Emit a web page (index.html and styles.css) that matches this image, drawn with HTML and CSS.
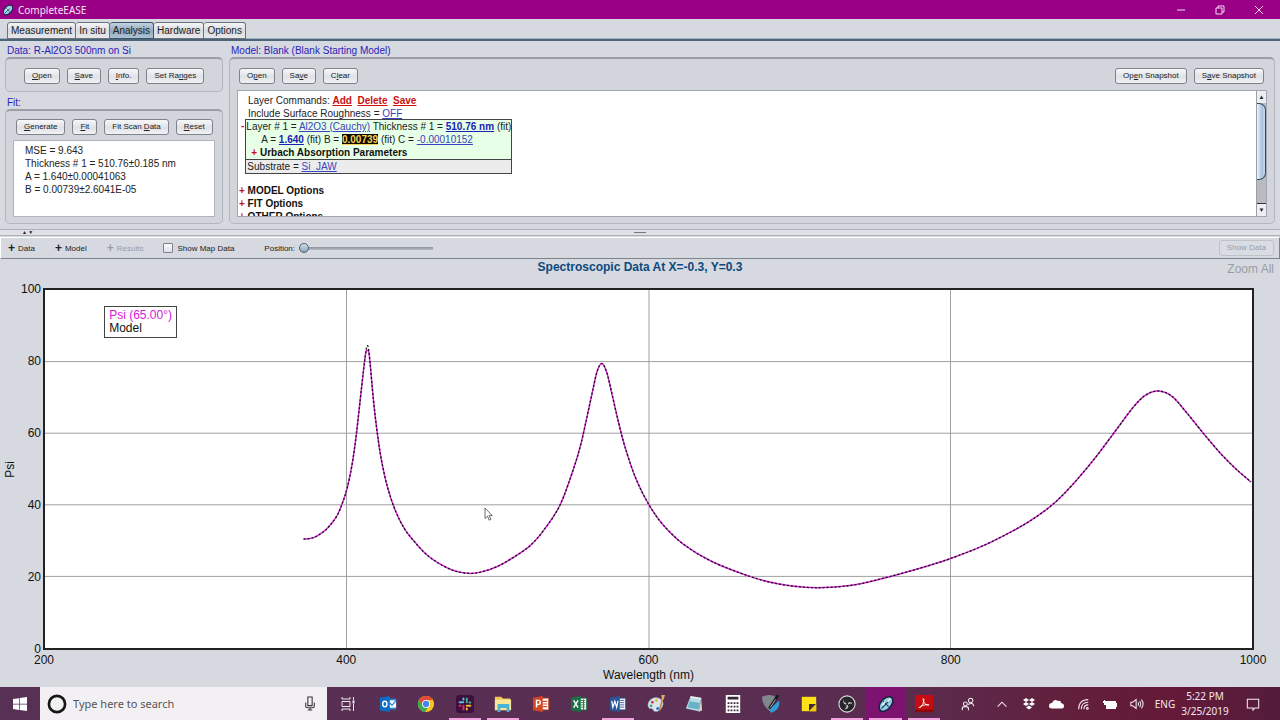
FILE: index.html
```html
<!DOCTYPE html>
<html lang="en">
<head>
<meta charset="utf-8">
<title>CompleteEASE</title>
<link rel="stylesheet" href="styles.css">
</head>
<body>
<svg class="defs" aria-hidden="true">
  <symbol id="logo" viewBox="0 0 16 16">
    <ellipse cx="8" cy="8" rx="4.6" ry="7.6" transform="rotate(42 8 8)" fill="#9bd0e8" stroke="#10283c" stroke-width="1.4"/>
    <path d="M4 12 12 4M5.500 5.500l5 5" stroke="#1b4b66" stroke-width="1" fill="none"/>
    <path d="M5 9l2-3M9.500 6l2.500-2.500" stroke="#fff" stroke-width="1.2"/>
  </symbol>
</svg>

<header class="titlebar">
  <svg class="app-logo"><use href="#logo"/></svg>
  <span class="app-name">CompleteEASE</span>
  <div class="window-buttons">
    <button aria-label="Minimize"><svg viewBox="0 0 10 10"><path d="M1 5h8"/></svg></button>
    <button aria-label="Restore"><svg viewBox="0 0 10 10"><path d="M1 3h6v6H1zM3 3V1h6v6H7"/></svg></button>
    <button aria-label="Close"><svg viewBox="0 0 10 10"><path d="M1 1l8 8M9 1 1 9"/></svg></button>
  </div>
</header>

<nav class="tabs">
  <button class="tab">Measurement</button>
  <button class="tab">In situ</button>
  <button class="tab active">Analysis</button>
  <button class="tab">Hardware</button>
  <button class="tab">Options</button>
</nav>

<main class="analysis">
  <section class="workspace">
    <div class="side">
      <h2 class="caption">Data: R-Al2O3 500nm on Si</h2>
      <div class="panel data-panel">
        <button class="btn"><u>O</u>pen</button>
        <button class="btn"><u>S</u>ave</button>
        <button class="btn"><u>I</u>nfo.</button>
        <button class="btn">Set Ra<u>n</u>ges</button>
      </div>
      <h2 class="caption fit-caption">Fit:</h2>
      <div class="panel fit-panel">
        <div class="fit-buttons">
          <button class="btn"><u>G</u>enerate</button>
          <button class="btn"><u>F</u>it</button>
          <button class="btn">Fit Scan <u>D</u>ata</button>
          <button class="btn"><u>R</u>eset</button>
        </div>
        <div class="fit-results">
          <p>MSE = 9.643</p>
          <p>Thickness # 1 = 510.76±0.185 nm</p>
          <p>A = 1.640±0.00041063</p>
          <p>B = 0.00739±2.6041E-05</p>
        </div>
      </div>
    </div>

    <div class="model">
      <h2 class="caption">Model: Blank (Blank Starting Model)</h2>
      <div class="panel model-panel">
        <div class="model-buttons">
          <button class="btn">O<u>p</u>en</button>
          <button class="btn">Sa<u>v</u>e</button>
          <button class="btn">C<u>l</u>ear</button>
          <span class="spacer"></span>
          <button class="btn">Op<u>e</u>n Snapshot</button>
          <button class="btn">S<u>a</u>ve Snapshot</button>
        </div>
        <div class="editor">
          <div class="editor-text">
            <p class="indent">Layer Commands: <a class="cmd" href="#">Add</a>&nbsp; <a class="cmd" href="#">Delete</a>&nbsp; <a class="cmd" href="#">Save</a></p>
            <p class="indent">Include Surface Roughness = <a href="#">OFF</a></p>
            <div class="layer-row">
              <span class="mark">-</span>
              <div class="layers">
                <div class="layer">
                  <p>Layer # 1 = <a href="#">Al2O3 (Cauchy)</a> Thickness # 1 = <a class="fitted" href="#">510.76 nm</a> (fit)</p>
                  <p class="params">A = <a class="fitted" href="#">1.640</a> (fit) B = <a class="fitted selected" href="#">0.00739</a> (fit) C = <a href="#">-0.00010152</a></p>
                  <p class="heading urbach"><span class="mark">+</span> Urbach Absorption Parameters</p>
                </div>
                <p class="substrate">Substrate = <a href="#">Si_JAW</a></p>
              </div>
            </div>
            <div class="options">
              <p class="heading"><span class="mark">+</span> MODEL Options</p>
              <p class="heading"><span class="mark">+</span> FIT Options</p>
              <p class="heading"><span class="mark">+</span> OTHER Options</p>
            </div>
          </div>
          <div class="scrollbar">
            <button aria-label="Scroll up">▲</button>
            <div class="track"><div class="thumb"></div></div>
            <button aria-label="Scroll down">▼</button>
          </div>
        </div>
      </div>
    </div>
  </section>

  <div class="splitter"><span class="arrows">▲ ▼</span><span class="grip"></span></div>

  <div class="toolbar">
    <button class="tool"><b>+</b>Data</button>
    <button class="tool"><b>+</b>Model</button>
    <button class="tool" disabled><b>+</b>Results</button>
    <label class="check"><input type="checkbox">Show Map Data</label>
    <label class="position">Position:<input type="range" min="0" max="100" value="0"></label>
    <span class="spacer"></span>
    <button class="btn show-data" disabled>Show Data</button>
  </div>

  <section class="chart">
    <div class="chart-head">
      <span></span>
      <h1>Spectroscopic Data At X=-0.3, Y=0.3</h1>
      <button class="zoom-all">Zoom All</button>
    </div>
    <div class="y-title"><span>Psi</span></div>
    <div class="y-ticks"><span>100</span><span>80</span><span>60</span><span>40</span><span>20</span><span>0</span></div>
    <div class="plot">
      <svg class="plot-svg" viewBox="44 289 1209 360" preserveAspectRatio="none">
        <path class="grid-line" d="M44 361H1253M44 433H1253M44 505H1253M44 577H1253M346 289V649M649 289V649M951 289V649"/>
        <path class="curve" id="data-curve"/>
        <path class="curve fit" id="model-curve"/>
      </svg>
      <div class="legend"><span class="psi">Psi (65.00°)</span><span>Model</span></div>
      <svg class="cursor" viewBox="0 0 9 14"><path d="M1 1v10.500l2.500-2.300 1.700 4 1.700-.8-1.700-3.800h3z"/></svg>
    </div>
    <div class="x-ticks"><span>200</span><span>400</span><span>600</span><span>800</span><span>1000</span></div>
    <div class="x-title">Wavelength (nm)</div>
  </section>
</main>

<footer class="taskbar">
  <button class="start" aria-label="Start"><svg viewBox="0 0 14 14"><path fill="#fff" d="M0 2 6 1.200v5.500H0zM6.700 1.100 14 0v6.700H6.700zM0 7.400h6v5.500L0 12zM6.700 7.400H14V14l-7.300-1.100z"/></svg></button>
  <label class="search">
    <svg class="ring" viewBox="0 0 18 18"><circle cx="9" cy="9" r="7.300" fill="none" stroke="#161616" stroke-width="2.400"/></svg>
    <input type="text" placeholder="Type here to search" aria-label="Search">
    <svg class="mic" viewBox="0 0 10 14"><path d="M3 1h4v8H3zM1 6v3.500q0 1.500 1.500 1.500h5Q9 11 9 9.500V6M5 11v2M3 13h4" fill="none" stroke="#333" stroke-width="1"/></svg>
  </label>
  <button class="task-view" aria-label="Task View"><svg viewBox="0 0 16 14"><path d="M2 0v2h8V0M2 4.500h8v5H2zM2 14v-2h8v2M13.500 0v3M13.500 7v7" fill="none" stroke="#eee" stroke-width="1"/><path d="M12.500 3.500h2v3h-2z" fill="#eee"/></svg></button>
  <div class="apps">
    <button aria-label="Outlook"><svg viewBox="0 0 20 20"><path fill="#2a8bd8" d="M10 4h9v12h-9z"/><path fill="#fff" d="M11 6h8v8h-8z"/><path d="M12 9l2.500 2.500L19 6" stroke="#2a8bd8" stroke-width="1.500" fill="none"/><path fill="#0a6cc4" d="M1 3l11-2v18L1 17z"/><ellipse cx="6.500" cy="10" rx="2.400" ry="3" fill="none" stroke="#fff" stroke-width="1.600"/></svg></button>
    <button aria-label="Chrome"><svg viewBox="0 0 20 20"><circle cx="10" cy="10" r="9" fill="#f8c51c"/><path fill="#e0483a" d="M2.200 5.500A9 9 0 0 1 17.800 5.500H10L5.500 11z"/><path fill="#3fa652" d="M2.200 5.500A9 9 0 0 0 9 19l4-6.500-7-1z"/><circle cx="10" cy="10" r="4.400" fill="#fff"/><circle cx="10" cy="10" r="3.500" fill="#4285f4"/></svg></button>
    <button class="running" aria-label="Slack"><svg viewBox="0 0 20 20"><rect width="20" height="20" rx="4" fill="#3d1040"/><g fill="none" stroke-width="2.200" stroke-linecap="round"><path stroke="#4fc3ea" d="M4 8h4M8.300 4v1"/><path stroke="#3bb37f" d="M12 4v4M15 8.300h1"/><path stroke="#e8b43a" d="M12 12h4M12 15v1"/><path stroke="#df2b61" d="M8.300 12v4M4 12h1"/></g></svg></button>
    <button class="running" aria-label="File Explorer"><svg viewBox="0 0 20 20"><path fill="#efc654" d="M1 2h7l2 2h8v12H1z"/><path fill="#fbe596" d="M1 5h18v12H1z"/><path fill="#4ab4d8" d="M4 10h13v9h-3v-4.500H7V19H4z"/></svg></button>
    <button aria-label="PowerPoint"><svg viewBox="0 0 20 20"><path fill="#fff" stroke="#d04a27" d="M10 3.500h8.500v13H10z"/><path d="M12 7h5M12 10h5M12 13h5" stroke="#d04a27" stroke-width="1.300"/><path fill="#d24625" d="M1 3l11-2v18L1 17z"/><path d="M5 14V6h2.200q2 0 2 2.200T7 10.500H5" fill="none" stroke="#fff" stroke-width="1.600"/></svg></button>
    <button aria-label="Excel"><svg viewBox="0 0 20 20"><path fill="#fff" stroke="#1f7244" d="M10 3.500h8.500v13H10z"/><path d="M12 6h5M12 8.500h5M12 11h5M12 13.500h5M15 5v11" stroke="#1f7244"/><path fill="#1d7044" d="M1 3l11-2v18L1 17z"/><path d="M4 6l5 8M9 6l-5 8" stroke="#fff" stroke-width="1.600"/></svg></button>
    <button class="running" aria-label="Word"><svg viewBox="0 0 20 20"><path fill="#fff" stroke="#2a5699" d="M10 3.500h8.500v13H10z"/><path d="M12 6h5M12 8.500h5M12 11h5M12 13.500h5" stroke="#2a5699"/><path fill="#2a5699" d="M1 3l11-2v18L1 17z"/><path d="M3 6.500l1.300 7L6.500 7l2 6.500 1.500-7" fill="none" stroke="#fff" stroke-width="1.400"/></svg></button>
    <button aria-label="Paint"><svg viewBox="0 0 20 20"><path fill="#d8e6ef" stroke="#8ca6b6" stroke-width=".6" d="M3 6q5-5 11-2 4 2 4 6-1 6-6 8-4 1-5-1-.5-2-2-2-3 1-4-3 0-4 2-6z"/><circle cx="6" cy="8" r="1.600" fill="#d34a3c"/><circle cx="10.500" cy="6" r="1.600" fill="#e6b52d"/><circle cx="4.500" cy="12" r="1.500" fill="#47a04d"/><circle cx="12" cy="15" r="1.800" fill="#3a72c4"/><path d="M17.500 3 14 17" stroke="#c98c52" stroke-width="2"/><path d="M16 0h4l-1.500 5h-2z" fill="#e4ad65"/></svg></button>
    <button aria-label="Notepad"><svg viewBox="0 0 20 20"><path fill="#b5dce6" d="M6 2l12 2-3 14L1 15z"/><path fill="#6ab1c6" d="M5 7l12 2-2 7-12-2z"/><path d="M6 2l12 2" stroke="#e8eff1" stroke-width="2"/><path fill="#d9d5c0" d="M18 4l1 13-4 2z"/></svg></button>
    <button aria-label="Calculator"><svg viewBox="0 0 20 20"><path fill="#fff" d="M2 0h16v20H2z"/><path fill="#3c243a" d="M4 2h12v3H4zM4 8h2v2H4zM7.300 8h2v2h-2zM10.700 8h2v2h-2zM14 8h2v2h-2zM4 12h2v2H4zM7.300 12h2v2h-2zM10.700 12h2v2h-2zM14 12h2v2h-2zM4 16h2v2H4zM7.300 16h2v2h-2zM10.700 16h2v2h-2zM14 16h2v2h-2z"/></svg></button>
    <button aria-label="Pen tool"><svg viewBox="0 0 20 20"><path fill="#80878c" d="M0 2q9-4 15 0L9 18Q0 12 0 2z"/><path fill="#2e9ed9" d="M19 6q2 10-9 14l-2-4z"/><path d="M18 0 8 15" stroke="#15191d" stroke-width="3"/><path d="M15 5l-6 9" stroke="#eee" stroke-width=".8"/></svg></button>
    <button aria-label="Sticky Notes"><svg viewBox="0 0 20 20"><path fill="#fde115" d="M2 2h16v16H2z"/><path fill="#3f2d2b" d="M10 10h8l-8 8z"/><path fill="#f2c911" d="M18 10v8h-8z"/></svg></button>
    <button class="running" aria-label="OBS"><svg viewBox="0 0 20 20"><circle cx="10" cy="10" r="9" fill="#272528" stroke="#dedede" stroke-width="1.200"/><path fill="#bdbdbd" d="M7 3q-2 4 2 6l.5 1-1 .8Q4 9 7 3zM11 8.500q4-2.500 5.500 2.500-2-2.500-4-1l-1 .5zM9 11.500l2-.5q2 4-4 5 3-2 2-4.500z"/></svg></button>
    <button class="running current" aria-label="CompleteEASE"><svg viewBox="0 0 16 16"><use href="#logo"/></svg></button>
    <button class="running" aria-label="Acrobat"><svg viewBox="0 0 20 20"><path fill="#c50c12" d="M0 0h20v19H0z"/><path fill="#8e080e" d="M0 16h20v3H0z"/><path d="M5 14.500q5-4 5-9.500-1-2-1 0Q10 11 15 11.500q1-1-1-1-5 0-9.500 3.500z" fill="none" stroke="#fff" stroke-width="1"/></svg></button>
  </div>
  <span class="spacer"></span>
  <div class="tray">
    <button class="people" aria-label="People"><svg viewBox="0 0 16 16"><circle cx="11" cy="4" r="2.500"/><circle cx="5" cy="8" r="2.200"/><path d="M1.500 15v-2q0-2 3.500-2t3.500 2v2M8 8.500q6-3 6.500 2"/></svg></button>
    <button aria-label="Show hidden icons"><svg viewBox="0 0 16 16"><path d="M3 11l5-5 5 5"/></svg></button>
    <button aria-label="Dropbox"><svg class="solid" viewBox="0 0 16 16"><path d="M5 2l3 2-3 2-3-2zM11 2l3 2-3 2-3-2zM5 6l3 2-3 2-3-2zM11 6l3 2-3 2-3-2zM8 9.500l3 2-3 2-3-2z"/></svg></button>
    <button aria-label="OneDrive"><svg class="solid" viewBox="0 0 16 16"><path d="M1 10q0-3 3-3 2-5 6-2 3-1 3 2 3 .5 3 3 0 2.500-2 2.500H4q-3 0-3-2.500z"/></svg></button>
    <button aria-label="Wi-Fi"><svg viewBox="0 0 16 16"><path d="M3 14Q3 3 14 3M6 14q0-8 8-8M9 14q0-5 5-5"/><circle cx="13" cy="13" r="1"/></svg></button>
    <button aria-label="Battery"><svg class="solid" viewBox="0 0 16 16"><path d="M4 5h10v2h1v4h-1v2H4V9H2V7H1V5h1V4h1v1z"/></svg></button>
    <button aria-label="Volume"><svg viewBox="0 0 16 16"><path d="M1 6h2l4-3v10l-4-3H1zM9 6q1.500 2 0 4M11 4.500q2.500 3.500 0 7M13 3q4 5 0 10"/></svg></button>
    <span class="lang">ENG</span>
    <time class="clock" datetime="2019-03-25T17:22">5:22 PM<br>3/25/2019</time>
    <button class="notify" aria-label="Notifications"><svg viewBox="0 0 16 16"><path d="M1.500 2.500h13v10H10l-2 2.500v-2.500H1.500z"/></svg></button>
  </div>
</footer>
<script src="chart.js"></script>
</body>
</html>
```

FILE: styles.css
```css
* { box-sizing: border-box; }
body {
  margin: 0;
  min-height: 100vh;
  display: flex;
  flex-direction: column;
  background: #d6d9e0;
  font-family: "Liberation Sans", Arial, sans-serif;
  font-size: 10px;
  color: #222;
}
h1, h2, p { margin: 0; }
button, input { font: inherit; color: inherit; margin: 0; }
button { padding: 0; border: 0; background: none; white-space: nowrap; }
.defs { display: none; }
.spacer { flex: 1; }

.titlebar {
  display: flex;
  align-items: center;
  height: 19px;
  padding: 0 2px;
  background: #990085;
  color: #f5e6f3;
  font-family: "Noto Sans", sans-serif;
}
.app-logo { width: 12px; height: 12px; margin-right: 4px; }
.window-buttons { display: flex; margin-left: auto; }
.window-buttons button { width: 39px; height: 19px; }
.window-buttons svg { width: 10px; height: 10px; fill: none; stroke: #f3d9ef; display: block; margin: auto; }

.tabs {
  display: flex;
  padding: 3px 7px 0;
  border-bottom: 2px solid #4a6478;
  box-shadow: inset 0 -1px #9fb2c0;
  height: 22px;
}
.tab {
  height: 17px;
  padding: 0 3px;
  border: 1px solid #6c727b;
  border-left-width: 0;
  border-radius: 3px 3px 0 0;
  background: linear-gradient(#f4f5f7, #d9dce1 50%, #e6e8ec);
}
.tab:first-child { border-left-width: 1px; }
.tab.active { background: linear-gradient(#c3d2df, #91abc1 50%, #aec3d4); border-color: #3c5468; }

.analysis { flex: 1; display: flex; flex-direction: column; }
.workspace {
  display: grid;
  grid-template-columns: 218px 1fr;
  grid-template-rows: minmax(0, 1fr);
  gap: 6px;
  padding: 4px 5px 5px;
  height: 188px;
}
.side, .model { display: flex; flex-direction: column; min-width: 0; }
.caption { flex: none; height: 12px; padding-left: 2px; font-size: 10px; line-height: 12px; font-weight: normal; color: #2a22b8; }
.fit-caption { margin: 5px 0 0; }
.panel {
  border: 1px solid #b3b6be;
  border-top: 2px solid #9b9ea6;
  border-radius: 5px;
  background: #d2d5dc;
}
.btn {
  height: 16px;
  padding: 0 7px;
  border: 1px solid #7d828b;
  border-radius: 3px;
  background: linear-gradient(#f8f8fa, #dfe1e6 55%, #f1f2f4);
  font-size: 8px;
  line-height: 14px;
}
.data-panel { display: flex; flex: none; gap: 7px; padding: 9px 18px; height: 35px; }
.fit-panel { flex: 1; min-height: 0; padding: 8px 7px 6px; display: flex; flex-direction: column; gap: 5px; }
.fit-buttons { display: flex; gap: 7px; padding: 0 3px; }
.fit-results { flex: 1; padding: 3px 11px; border: 1px solid #b0b5bd; background: #fff; line-height: 13px; }

.model-panel { flex: 1; display: flex; flex-direction: column; padding: 9px 7px 6px; gap: 6px; min-height: 0; }
.model-buttons { display: flex; gap: 7px; padding: 0 3px 0 2px; }
.editor { flex: 1; display: flex; min-height: 0; border: 1px solid #a2a6ae; background: #fff; }
.editor-text { flex: 1; overflow: hidden; padding: 3px 1px 0; line-height: 13px; white-space: nowrap; }
.editor-text p { height: 13px; }
.editor a { color: #3a43c0; }
.editor a.fitted { color: #1a22b4; font-weight: bold; }
.editor a.cmd { color: #cc1111; font-weight: bold; }
.editor a.selected { background: #0c0800; color: #f2d257; }
.indent { padding-left: 9px; }
.layer-row { display: flex; gap: 1px; padding-left: 2px; margin-top: -1px; }
.layers { border: 1px solid #444; min-width: 259px; }
.layer { background: #e6ffe6; border-bottom: 1px solid #444; }
.params { padding-left: 15px; }
.urbach { padding-left: 5px; }
.substrate { background: #ececec; padding-left: 1px; }
.mark { color: #c4121c; font-weight: bold; }
.heading { font-weight: bold; color: #111; }
.options { padding-top: 10px; }
.scrollbar { width: 10px; display: flex; flex-direction: column; border-left: 1px solid #9b9ea6; background: #eceef1; }
.scrollbar button { height: 12px; font-size: 6px; line-height: 12px; }
.track { flex: 1; background: #b9bac2; border-bottom: 1px solid #333; }
.thumb { height: 77%; border: 1px solid #32495e; border-left-width: 0; border-radius: 0 7px 7px 0; background: linear-gradient(90deg, #eaf5fc, #a8c4dc 60%, #c6ddec); }

.splitter {
  display: grid;
  grid-template-columns: 1fr 12px 1fr;
  align-items: center;
  height: 7px;
  border: 1px solid #aeb1b9;
  border-width: 1px 0;
  background: #dfe1e6;
}
.arrows { padding-left: 22px; font-size: 5px; line-height: 5px; }
.grip { height: 1px; background: #777; }

.toolbar {
  display: flex;
  align-items: center;
  height: 22px;
  margin-top: 1px;
  padding: 0 5px 0 7px;
  border: 1px solid #fff;
  border-right-color: #7d838c;
  border-bottom: 1px solid #7d838c;
  font-size: 8px;
}
.tool { display: flex; align-items: center; margin-right: 20px; }
.tool b { font-size: 12px; line-height: 12px; margin-right: 3px; }
.tool:disabled, .show-data { color: #9a9da4; }
.show-data { border-color: #bfc2c9; background: #d9dce2; }
.check { display: flex; align-items: center; gap: 4px; margin-right: 30px; }
.check input { appearance: none; width: 10px; height: 10px; border: 1px solid #7d838c; border-radius: 1px; background: linear-gradient(#fafafa, #dcdfe4); }
.position { display: flex; align-items: center; gap: 4px; }
.position input { appearance: none; width: 134px; height: 10px; background: linear-gradient(#8e949e, #b4bac3) center / 100% 3px no-repeat; border-radius: 2px; }
.position input::-webkit-slider-thumb { appearance: none; width: 10px; height: 10px; border: 1px solid #4e6070; border-radius: 50%; background: linear-gradient(#d2dfe8, #8ba5b8); }

.chart {
  flex: 1;
  display: grid;
  grid-template-columns: 20px 24px 1fr;
  grid-template-rows: 30px 1fr 18px 20px;
  padding-right: 27px;
  font-size: 12px;
  color: #111;
}
.chart-head { grid-column: 1 / -1; display: grid; grid-template-columns: 1fr auto 1fr; margin-right: -27px; align-items: start; }
.chart-head h1 { font-size: 12px; line-height: 16px; color: #0b4a7c; }
.zoom-all { justify-self: end; margin-right: 6px; line-height: 20px; color: #9a9da4; }
.y-title { display: grid; place-items: center; }
.y-title span { writing-mode: vertical-rl; transform: rotate(180deg); }
.y-ticks { display: flex; flex-direction: column; justify-content: space-between; text-align: right; padding-right: 3px; }
.y-ticks span { height: 0; line-height: 0; }
.plot { position: relative; border: 2px solid #222; background: #fff; min-height: 200px; margin: -1px; }
.plot-svg { position: absolute; inset: 0; width: 100%; height: 100%; }
.grid-line { fill: none; stroke: #a0a0a0; stroke-width: 1; vector-effect: non-scaling-stroke; }
.curve { fill: none; stroke: #dc28dc; stroke-width: 1.500; vector-effect: non-scaling-stroke; }
.curve.fit { stroke: #111; stroke-width: 1.300; stroke-dasharray: 2 2; }
.legend { position: absolute; left: 4.9%; top: 4.5%; display: flex; flex-direction: column; padding: 2px 4px; border: 1px solid #444; background: #fff; line-height: 13px; }
.psi { color: #d818d8; }
.cursor { position: absolute; left: 36.4%; top: 60.5%; width: 9px; height: 14px; fill: #fff; stroke: #444; stroke-width: .8; }
.x-ticks { grid-column: 3; display: flex; justify-content: space-between; line-height: 22px; }
.x-ticks span { width: 0; display: flex; justify-content: center; }
.x-title { grid-column: 3; text-align: center; line-height: 16px; }

.taskbar {
  display: flex;
  align-items: stretch;
  height: 33px;
  background: linear-gradient(90deg, #583056, #5a2d50 70%, #621f3c 84%, #641a38 92%, #541c3c);
  color: #f3e9ef;
  font-family: "Noto Sans", sans-serif;
}
.taskbar svg { display: block; margin: auto; }
.start { width: 40px; }
.start svg { width: 14px; height: 14px; }
.search { display: flex; align-items: center; width: 287px; padding: 0 11px 0 7px; background: #f3f0f4; }
.search .ring { width: 20px; height: 20px; margin: 0; }
.search input { flex: 1; min-width: 0; border: 0; padding: 0 6px; background: none; font-size: 11px; color: #444; }
.search input::placeholder { color: #555; opacity: 1; }
.search .mic { width: 12px; height: 15px; margin: 0; }
.task-view { width: 42px; }
.task-view svg { width: 16px; height: 14px; }
.apps { display: flex; width: 574px; }
.apps button { flex: 1; margin: 0 3px; border-bottom: 2px solid transparent; padding-top: 2px; }
.apps svg { width: 18px; height: 18px; }
.apps .running { border-bottom-color: #f3a2df; }
.apps .current { background-color: #7d1270; box-shadow: 3px 0 #7d1270, -3px 0 #7d1270; }
.tray { display: flex; align-items: center; padding-right: 4px; }
.tray button { width: 27px; }
.tray svg { width: 14px; height: 14px; fill: none; stroke: #f3e9ef; stroke-width: 1.200; }
.tray svg.solid { fill: #fff; stroke: none; width: 16px; height: 16px; }
.tray .people { width: 40px; }
.lang { width: 30px; text-align: center; }
.clock { width: 50px; text-align: center; line-height: 15px; }
.tray .notify { width: 46px; }
```

FILE: chart.js
```js
// Psi samples as [x, y] in the plot's viewBox units.
const samples = [
  [303, 539.500], [313, 538], [323, 532], [330, 525], [337, 515], [342, 503],
  [347, 487], [352, 462], [356, 433], [361, 388], [365, 354], [367, 350],
  [369, 356], [373, 400], [377, 434], [381, 460], [387, 487], [395, 511], [404, 529],
  [414, 542], [425, 554], [437, 563], [453, 571], [470, 574], [483, 572], [497, 567], [513, 558],
  [530, 546], [544, 530], [560, 505], [574, 467], [581, 443], [587, 416], [592, 393],
  [597, 371], [602, 363], [607, 373], [612, 394], [618, 420],
  [625, 447], [636, 479], [649, 505], [663, 525], [684, 545], [712, 562], [750, 577],
  [778, 584.500], [806, 588], [830, 588], [858, 585], [891, 577], [928, 566.500], [951, 559], [984, 546],
  [1012, 532], [1031, 521], [1053, 505], [1073, 485], [1095, 459], [1116, 431], [1134, 407],
  [1146, 395], [1159, 390.500], [1173, 396], [1188, 413], [1205, 434],
  [1223, 455], [1238, 470], [1252, 482]
];

// Catmull-Rom spline through the samples, written as cubic segments.
function smooth(points) {
  let d = `M${points[0][0]} ${points[0][1]}`;
  for (let i = 0; i < points.length - 1; i++) {
    const a = points[Math.max(i - 1, 0)];
    const b = points[i];
    const c = points[i + 1];
    const e = points[Math.min(i + 2, points.length - 1)];
    d += `C${b[0] + (c[0] - a[0]) / 6} ${b[1] + (c[1] - a[1]) / 6} ` +
         `${c[0] - (e[0] - b[0]) / 6} ${c[1] - (e[1] - b[1]) / 6} ${c[0]} ${c[1]}`;
  }
  return d;
}

document.getElementById("data-curve").setAttribute("d", smooth(samples));
document.getElementById("model-curve").setAttribute("d",
  smooth(samples.map(([x, y]) => [x, x === 367 ? 345 : y])));
```
